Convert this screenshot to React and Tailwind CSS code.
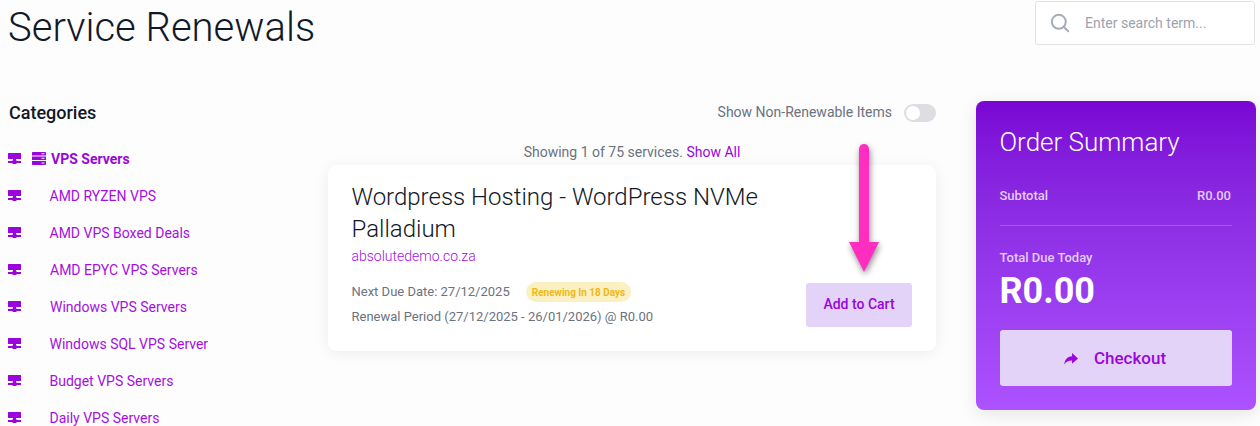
const cats = [
  ["AMD RYZEN VPS", "pl-[28.5px]"],
  ["AMD VPS Boxed Deals", "pl-[28.5px]"],
  ["AMD EPYC VPS Servers", "pl-[29px]"],
  ["Windows VPS Servers", "pl-[29px]"],
  ["Windows SQL VPS Server", "pl-[28.5px]"],
  ["Budget VPS Servers", "pl-[28.5px]"],
  ["Daily VPS Servers", "pl-[28.5px]"],
];

function NetIcon() {
  return (
    <svg width="13" height="11" viewBox="0 0 13 11" className="shrink-0 text-[#9a05dc]" fill="currentColor">
      <path d="M0.5 0h12a.5.5 0 0 1 .5.5V6H0V.5A.5.5 0 0 1 .5 0z" />
      <rect x="5" y="6" width="3" height="2" />
      <rect x="0" y="8" width="13" height="2" />
      <rect x="4.5" y="7" width="4" height="4" rx="0.6" />
    </svg>
  );
}

function ServerIcon() {
  return (
    <svg width="14" height="13" viewBox="0 0 14 13" className="shrink-0 text-[#9a05dc]" fill="currentColor">
      <path fillRule="evenodd" d="M0 .8A.8.8 0 0 1 .8 0h12.4a.8.8 0 0 1 .8.8V3.6H0zM9.5 1.3h3v1h-3zM0 4.6h14V8H0zM9.5 5.8h3v1h-3zM0 9h14v3.2a.8.8 0 0 1-.8.8H.8a.8.8 0 0 1-.8-.8zM9.5 10.4h3v1h-3z" />
    </svg>
  );
}

function Arrow() {
  return (
    <svg width="44" height="136" viewBox="0 0 44 136" className="absolute left-[842px] top-[140px] z-10 overflow-visible" style={{ filter: "drop-shadow(1px 3px 3px rgba(0,0,0,.45))" }}>
      <rect x="17" y="4" width="10" height="102" rx="5" fill="#ff2dc0" />
      <path d="M7 102h30L22 132z" fill="#ff2dc0" />
    </svg>
  );
}

export default function App() {
  return (
    <div className="relative h-[426px] w-[1260px] overflow-hidden bg-[#fdfdfd] font-['Roboto',sans-serif]">
      <Arrow />
      <header className="flex items-start justify-between pl-2 pr-[5px] pt-px">
        <h1 className="mt-[4px] text-[40px] leading-[46px] font-light text-[#111827]">Service Renewals</h1>
        <div className="flex h-[44px] w-[220px] items-center rounded-[3px] border border-[#e2e2e6] bg-white pl-[14px]">
          <svg width="20" height="20" viewBox="0 0 20 20" fill="none" stroke="#a7adb8" strokeWidth="2" strokeLinecap="round" className="shrink-0">
            <circle cx="8.8" cy="8.8" r="7" />
            <path d="M14 14l4.2 4.2" />
          </svg>
          <span className="ml-[15px] text-sm text-[#9ca3af]">Enter search term...</span>
        </div>
      </header>

      <div className="mt-[50px] flex pl-2">
        <aside className="w-[320px] shrink-0">
          <h2 className="pl-px text-lg leading-6 font-medium text-[#111827]">Categories</h2>
          <ul className="mt-[15px] text-sm text-[#a50fe0]">
            <li className="flex h-[37px] items-center">
              <NetIcon />
              <span className="ml-[11px]"><ServerIcon /></span>
              <span className="ml-[5px] font-bold text-[#9a05dc]">VPS Servers</span>
            </li>
            {cats.map(([name, pad]) => (
              <li key={name} className="flex h-[37px] items-center">
                <NetIcon />
                <span className={pad}>{name}</span>
              </li>
            ))}
          </ul>
        </aside>

        <main className="w-[608px] shrink-0">
          <div className="flex h-[22px] items-center justify-end">
            <span className="text-sm text-[#6b7280]">Show Non-Renewable Items</span>
            <span className="mt-[2px] ml-[12px] flex h-[18px] w-[32px] items-center rounded-full bg-[#dcdee2] pl-[2px]">
              <span className="h-[14px] w-[14px] rounded-full bg-white" />
            </span>
          </div>
          <p className="mt-[19px] text-center text-sm leading-5 text-[#6b7280]">
            Showing 1 of 75 services. <span className="font-normal text-[#9a05dc]">Show All</span>
          </p>
          <section className="mt-[3px] flex h-[186px] flex-col rounded-lg bg-white pr-6 pl-[23.5px] pt-[16px] shadow-[0_2px_14px_rgba(0,0,0,0.07)]">
            <h3 className="w-[440px] text-2xl leading-8 font-light text-[#111827]">Wordpress Hosting - WordPress NVMe Palladium</h3>
            <a className="mt-px text-sm leading-5 font-light text-[#a50fe0]">absolutedemo.co.za</a>
            <div className="mt-[16px] flex items-end justify-between">
              <div className="text-[13px] text-[#6b7280]">
                <div className="flex h-[20px] items-center">
                  <span>Next Due Date: 27/12/2025</span>
                  <span className="ml-[16px] flex h-[20px] items-center rounded-full bg-[#faf0c2] px-[6px] text-[10px] font-bold text-[#f0b818]">Renewing In 18 Days</span>
                </div>
                <div className="mt-[5px] leading-5">Renewal Period (27/12/2025 - 26/01/2026) @ R0.00</div>
              </div>
              <button className="h-[44px] w-[106px] rounded-[3px] bg-[#e3d3f8] pb-[2px] text-sm font-medium text-[#9a05dc]">Add to Cart</button>
            </div>
          </section>
        </main>

        <aside className="ml-[40px] h-[309px] w-[280px] shrink-0 rounded-lg bg-linear-to-b from-[#7a04d4] to-[#ad52ff] pr-6 pl-[23.5px] pt-[25px] shadow-[0_4px_18px_rgba(0,0,0,0.10)]">
          <h2 className="text-[26px] leading-8 font-light text-white">Order Summary</h2>
          <div className="mt-[30px] flex justify-between pr-px text-[13px] leading-4 font-medium text-[#e3cdfb]">
            <span>Subtotal</span>
            <span>R0.00</span>
          </div>
          <div className="mt-[21px] border-t border-white/20" />
          <div className="mt-[24px] text-[13px] leading-4 font-medium text-[#e3cdfb]">Total Due Today</div>
          <div className="mt-[5px] text-4xl leading-10 font-bold text-white">R0.00</div>
          <button className="mt-[19px] ml-[0.5px] flex h-[56px] w-[232px] items-center justify-center rounded-[3px] bg-[#e3d3f8] pt-[2px] pr-[2px] text-[17px] font-medium text-[#9a05dc]">
            <svg width="14" height="12" viewBox="0 0 13 11" fill="currentColor" className="mr-[16px]">
              <path d="M7.5 0L13 5 7.5 10V7C4 7 2 8 .3 10.5.6 6.5 3 3.2 7.5 3z" />
            </svg>
            Checkout
          </button>
        </aside>
      </div>
    </div>
  );
}
